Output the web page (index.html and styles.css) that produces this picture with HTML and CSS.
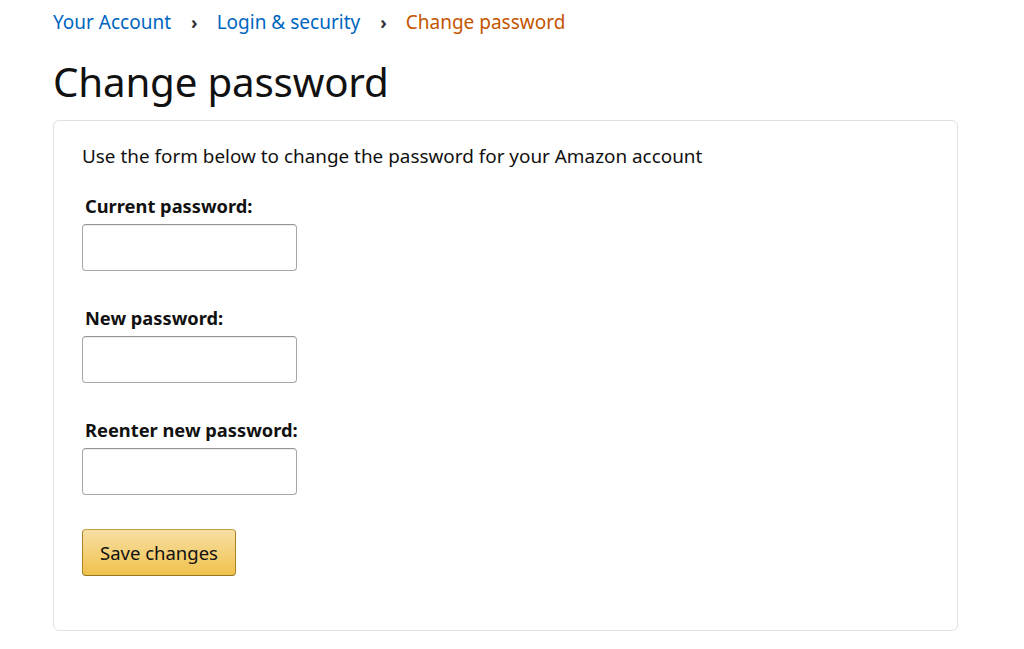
FILE: index.html
```html
<!DOCTYPE html>
<html>
<head>
<meta charset="utf-8">
<link rel="stylesheet" href="styles.css">
</head>
<body>
<div class="page">
  <nav class="crumbs">
    <a class="crumb" href="#">Your Account</a>
    <span class="sep">›</span>
    <a class="crumb" href="#">Login &amp; security</a>
    <span class="sep">›</span>
    <span class="crumb current">Change password</span>
  </nav>
  <h1 class="title">Change password</h1>
  <div class="card">
    <p class="intro">Use the form below to change the password for your Amazon account</p>
    <div class="field">
      <label class="label">Current password:</label>
      <input class="input" type="password">
    </div>
    <div class="field">
      <label class="label">New password:</label>
      <input class="input" type="password">
    </div>
    <div class="field">
      <label class="label">Reenter new password:</label>
      <input class="input" type="password">
    </div>
    <button class="btn">Save changes</button>
  </div>
</div>
</body>
</html>
```
FILE: styles.css
```css
* { box-sizing: border-box; }
body {
  margin: 0;
  background: #fff;
  font-family: "Noto Sans", "Open Sans", sans-serif;
  color: #111;
}
.page {
  padding: 0 0 0 53px;
  width: 958px;
}
.crumbs {
  display: flex;
  align-items: center;
  height: 44px;
  font-size: 19px;
}
.crumb {
  color: #0066c0;
  text-decoration: none;
}
.crumb.current { color: #c45500; }
.sep {
  color: #333;
  margin: 0 19px 0 20px;
  font-size: 18px;
  font-weight: 700;
}
.title {
  margin: 0;
  font-size: 40.3px;
  font-weight: 400;
  line-height: 76px;
  height: 76px;
  letter-spacing: -0.2px;
}
.card {
  border: 1px solid #e0e0e0;
  border-radius: 6px;
  padding: 22px 28px 54px 28px;
}
.intro {
  margin: 0;
  font-size: 18.9px;
  line-height: 26px;
  height: 43px;
}
.field {
  display: flex;
  flex-direction: column;
  margin-bottom: 27px;
}
.label {
  font-weight: 700;
  font-size: 18.3px;
  line-height: 24px;
  padding-left: 3px;
  margin-top: 8px;
  margin-bottom: 6px;
}
.input {
  width: 215px;
  height: 47px;
  border: 1px solid #a6a6a6;
  border-top-color: #949494;
  border-radius: 4px;
  box-shadow: 0 1px 0 rgba(255,255,255,.5), 0 1px 0 rgba(0,0,0,.07) inset;
}
.btn {
  display: block;
  margin-top: 34px;
  width: 154px;
  height: 47px;
  border: 1px solid #a88734;
  border-color: #c59f43 #aa8326 #957321;
  border-radius: 4px;
  background: linear-gradient(to bottom, #f7dfa5, #f0c14b);
  font-family: inherit;
  font-size: 18.5px;
  color: #111;
  padding: 0;
}
```
